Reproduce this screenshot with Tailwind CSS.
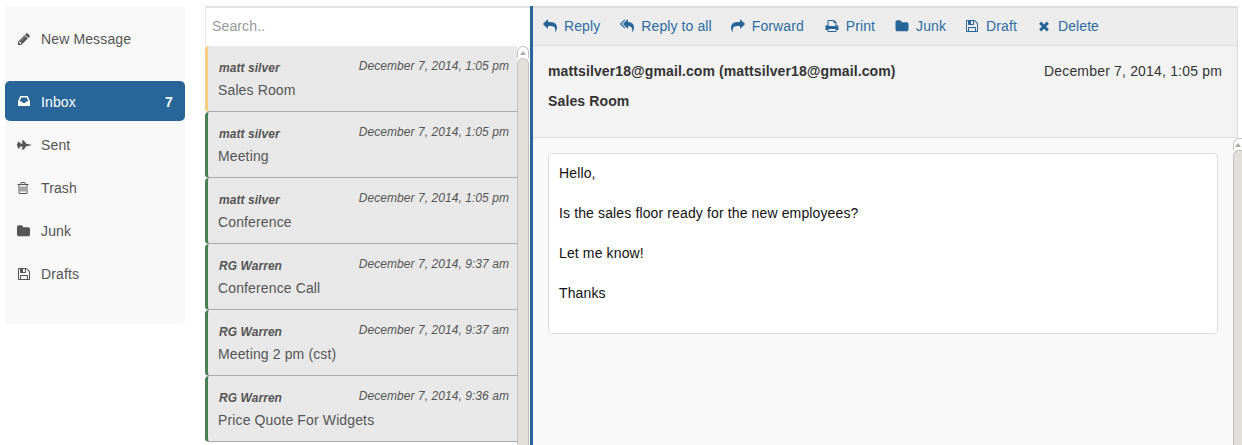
<!DOCTYPE html>
<html lang="en">
<head>
  <meta charset="UTF-8">
  <meta name="viewport" content="width=device-width, initial-scale=1.0">
  <title>Inbox</title>
  <script src="https://cdn.jsdelivr.net/npm/@tailwindcss/browser@4"></script>
</head>
<body class="bg-white font-['Liberation_Sans',Arial,sans-serif] text-[14px] leading-[20px] tracking-[0.13px] text-[#333]">
  <svg class="hidden">
    <symbol id="i-pencil" viewBox="0 0 1792 1792"><path d="M491 1536l91-91-235-235-91 91v107h128v128h107zm523-928q0-22-22-22-10 0-17 7l-542 542q-7 7-7 17 0 22 22 22 10 0 17-7l542-542q7-7 7-17zm-54-192l416 416-832 832h-416v-416zm683 96q0 53-37 90l-166 166-416-416 166-165q36-38 90-38 53 0 91 38l235 234q37 39 37 91z"/></symbol>
    <symbol id="i-inbox" viewBox="0 0 1792 1792"><path d="M1151 960h316q-1-3-2.5-8.5t-2.5-7.5l-212-496h-708l-212 496q-1 2-2.5 7.5t-2.5 8.5h316l95 192h320zm513 30v482q0 26-19 45t-45 19h-1408q-26 0-45-19t-19-45v-482q0-62 25-123l238-552q10-25 36.5-42t52.5-17h832q26 0 52.5 17t36.5 42l238 552q25 61 25 123z"/></symbol>
    <symbol id="i-plane" viewBox="0 0 16 10"><path d="M16 5 10.5 3.7 H9.8 L7.4 .2 H5 L6 3.4 H3.6 L2.2 1.4 H.6 L1.2 3.4 H0 V6.6 H1.2 L.6 8.6 H2.2 L3.6 6.6 H6 L5 9.8 H7.4 L9.8 6.3 H10.5 L16 5 Z"/></symbol>
    <symbol id="i-trash" viewBox="0 0 1792 1792"><path d="M704 736v576q0 14-9 23t-23 9h-64q-14 0-23-9t-9-23v-576q0-14 9-23t23-9h64q14 0 23 9t9 23zm256 0v576q0 14-9 23t-23 9h-64q-14 0-23-9t-9-23v-576q0-14 9-23t23-9h64q14 0 23 9t9 23zm256 0v576q0 14-9 23t-23 9h-64q-14 0-23-9t-9-23v-576q0-14 9-23t23-9h64q14 0 23 9t9 23zm128 724v-948h-896v948q0 22 7 40.5t14.5 27 10.5 8.5h832q3 0 10.5-8.5t14.5-27 7-40.5zm-672-1076h448l-48-117q-7-9-17-11h-317q-10 2-17 11zm928 32v64q0 14-9 23t-23 9h-96v948q0 83-47 143.5t-113 60.5h-832q-66 0-113-58.5t-47-141.5v-952h-96q-14 0-23-9t-9-23v-64q0-14 9-23t23-9h309l70-167q15-37 54-63t79-26h320q40 0 79 26t54 63l70 167h309q14 0 23 9t9 23z"/></symbol>
    <symbol id="i-folder" viewBox="0 0 1664 1792"><path d="M1664 648v704q0 92-66 158t-158 66h-1216q-92 0-158-66t-66-158v-960q0-92 66-158t158-66h320q92 0 158 66t66 158v32h672q92 0 158 66t66 158z"/></symbol>
    <symbol id="i-save" viewBox="0 0 1792 1792"><path d="M512 1536h768v-384h-768v384zm896 0h128v-896q0-14-10-38.5t-20-34.5l-281-281q-10-10-34-20t-39-10v416q0 40-28 68t-68 28h-576q-40 0-68-28t-28-68v-416h-128v1280h128v-416q0-40 28-68t68-28h832q40 0 68 28t28 68v416zm-384-928v-320q0-13-9.5-22.5t-22.5-9.5h-192q-13 0-22.5 9.5t-9.5 22.5v320q0 13 9.5 22.5t22.5 9.5h192q13 0 22.5-9.5t9.5-22.5zm640 32v928q0 40-28 68t-68 28h-1344q-40 0-68-28t-28-68v-1344q0-40 28-68t68-28h928q40 0 88 20t76 48l280 280q28 28 48 76t20 88z"/></symbol>
    <symbol id="i-reply" viewBox="0 0 1792 1792"><path d="M1792 1120q0 166-127 451-3 7-10.5 24t-13.5 30-13 22q-12 17-28 17-15 0-23.5-10t-8.5-25q0-9 2.5-26.5t2.5-23.5q5-68 5-123 0-101-17.5-181t-48.5-138.5-80-101-105.5-69.5-133-42.5-154-21.5-175.5-6h-224v256q0 26-19 45t-45 19-45-19l-512-512q-19-19-19-45t19-45l512-512q19-19 45-19t45 19 19 45v256h224q713 0 875 403 53 134 53 333z"/></symbol>
    <symbol id="i-reply-all" viewBox="0 0 1792 1792"><path d="M640 1082v70q0 42-39 59-13 5-25 5-27 0-45-19l-512-512q-19-19-19-45t19-45l512-512q29-31 70-14 39 17 39 59v69l-397 398q-19 19-19 45t19 45zm1152 38q0 58-17 133.5t-38.5 138-48 125-40.5 90.5l-20 40q-8 17-28 17-6 0-9-1-25-8-23-34 43-400-106-565-64-71-170.5-110.5t-267.5-52.5v251q0 42-39 59-13 5-25 5-27 0-45-19l-512-512q-19-19-19-45t19-45l512-512q18-19 45-19 12 0 25 5 39 17 39 59v262q411 28 599 221 169 173 169 509z"/></symbol>
    <symbol id="i-share" viewBox="0 0 1792 1792"><path d="M1792 640q0 26-19 45l-512 512q-19 19-45 19t-45-19-19-45v-256h-224q-98 0-175.5 6t-154 21.5-133 42.5-105.5 69.5-80 101-48.5 138.5-17.5 181q0 55 5 123 0 6 2.5 23.5t2.5 26.5q0 15-8.5 25t-23.5 10q-16 0-28-17-7-9-13-22t-13.5-30-10.5-24q-127-285-127-451 0-199 53-333 162-403 875-403h224v-256q0-26 19-45t45-19 45 19l512 512q19 19 19 45z"/></symbol>
    <symbol id="i-print" viewBox="0 0 1792 1792"><path d="M448 1536h896v-256h-896v256zm0-640h896v-384h-160q-40 0-68-28t-28-68v-160h-640v640zm1152 64q0-26-19-45t-45-19-45 19-19 45 19 45 45 19 45-19 19-45zm128 0v416q0 13-9.5 22.5t-22.5 9.5h-224v160q0 40-28 68t-68 28h-960q-40 0-68-28t-28-68v-160h-224q-13 0-22.5-9.5t-9.5-22.5v-416q0-79 56.5-135.5t135.5-56.5h64v-544q0-40 28-68t68-28h672q40 0 88 20t76 48l152 152q28 28 48 76t20 88v256h64q79 0 135.5 56.5t56.5 135.5z"/></symbol>
    <symbol id="i-times" viewBox="0 0 1408 1792"><path d="M1298 1322q0 40-28 68l-136 136q-28 28-68 28t-68-28l-294-294-294 294q-28 28-68 28t-68-28l-136-136q-28-28-28-68t28-68l294-294-294-294q-28-28-28-68t28-68l136-136q28-28 68-28t68 28l294 294 294-294q28-28 68-28t68 28l136 136q28 28 28 68t-28 68l-294 294 294 294q28 28 28 68z"/></symbol>
  </svg>

  <div class="flex h-[445px] overflow-hidden">
    <!-- folders -->
    <nav class="ml-[5px] mt-[6px] w-[180px] h-[318px] shrink-0 bg-[#f8f8f8] rounded-[2px] text-[#555]">
      <a class="flex items-center h-[40px] mt-[13px] pl-[12px] gap-[10px]"><svg class="w-[14px] h-[14px] fill-[#555]"><use href="#i-pencil"/></svg>New Message</a>
      <a class="flex items-center h-[40px] mt-[22px] pl-[12px] pr-[12px] pt-[2px] gap-[10px] bg-[#286699] rounded-[5px] text-white"><svg class="w-[14px] h-[14px] fill-white -mt-[2px]"><use href="#i-inbox"/></svg>Inbox<span class="ml-auto font-bold">7</span></a>
      <a class="flex items-center h-[40px] mt-[4px] pl-[12px] gap-[9px]"><svg class="w-[15px] h-[10px] fill-[#555]"><use href="#i-plane"/></svg>Sent</a>
      <a class="flex items-center h-[40px] mt-[3px] pl-[12px] gap-[10px]"><svg class="w-[14px] h-[14px] fill-[#555] -ml-[1px] mr-[1px]"><use href="#i-trash"/></svg>Trash</a>
      <a class="flex items-center h-[40px] mt-[3px] pl-[12px] gap-[11px]"><svg class="w-[13px] h-[14px] fill-[#555]"><use href="#i-folder"/></svg>Junk</a>
      <a class="flex items-center h-[40px] mt-[3px] pl-[12px] gap-[10px]"><svg class="w-[14px] h-[14px] fill-[#555]"><use href="#i-save"/></svg>Drafts</a>
    </nav>

    <!-- message list -->
    <section class="ml-[20px] mt-[6px] w-[325px] shrink-0 flex flex-col">
      <input placeholder="Search.." class="h-[40px] shrink-0 w-full px-[6px] pb-[2px] bg-white border-t-2 border-l border-[#e4e4e4] outline-none placeholder:text-[#999]">
      <div class="flex flex-1 min-h-0">
        <ul class="w-[312px] shrink-0">
          <li class="h-[66px] bg-[#e8e8e8] border-l-[3px] border-l-[#fbcb80] border-b border-b-[#aaa] rounded-l-[4px] pl-[10px] pr-[8px] pt-[10px] text-[#555]">
            <div class="flex justify-between h-[24px] text-[12px] italic tracking-[0.06px]"><b class="pt-[2px] pl-[1px]">matt silver</b><span>December 7, 2014, 1:05 pm</span></div>
            <div>Sales Room</div>
          </li>
          <li class="h-[66px] bg-[#e8e8e8] border-l-[3px] border-l-[#4a7f53] border-b border-b-[#aaa] rounded-l-[4px] pl-[10px] pr-[8px] pt-[10px] text-[#555]">
            <div class="flex justify-between h-[24px] text-[12px] italic tracking-[0.06px]"><b class="pt-[2px] pl-[1px]">matt silver</b><span>December 7, 2014, 1:05 pm</span></div>
            <div>Meeting</div>
          </li>
          <li class="h-[66px] bg-[#e8e8e8] border-l-[3px] border-l-[#4a7f53] border-b border-b-[#aaa] rounded-l-[4px] pl-[10px] pr-[8px] pt-[10px] text-[#555]">
            <div class="flex justify-between h-[24px] text-[12px] italic tracking-[0.06px]"><b class="pt-[2px] pl-[1px]">matt silver</b><span>December 7, 2014, 1:05 pm</span></div>
            <div>Conference</div>
          </li>
          <li class="h-[66px] bg-[#e8e8e8] border-l-[3px] border-l-[#4a7f53] border-b border-b-[#aaa] rounded-l-[4px] pl-[10px] pr-[8px] pt-[10px] text-[#555]">
            <div class="flex justify-between h-[24px] text-[12px] italic tracking-[0.06px]"><b class="pt-[2px] pl-[1px]">RG Warren</b><span>December 7, 2014, 9:37 am</span></div>
            <div>Conference Call</div>
          </li>
          <li class="h-[66px] bg-[#e8e8e8] border-l-[3px] border-l-[#4a7f53] border-b border-b-[#aaa] rounded-l-[4px] pl-[10px] pr-[8px] pt-[10px] text-[#555]">
            <div class="flex justify-between h-[24px] text-[12px] italic tracking-[0.06px]"><b class="pt-[2px] pl-[1px]">RG Warren</b><span>December 7, 2014, 9:37 am</span></div>
            <div>Meeting 2 pm (cst)</div>
          </li>
          <li class="h-[66px] bg-[#e8e8e8] border-l-[3px] border-l-[#4a7f53] border-b border-b-[#aaa] rounded-l-[4px] pl-[10px] pr-[8px] pt-[10px] text-[#555]">
            <div class="flex justify-between h-[24px] text-[12px] italic tracking-[0.06px]"><b class="pt-[2px] pl-[1px]">RG Warren</b><span>December 7, 2014, 9:36 am</span></div>
            <div>Price Quote For Widgets</div>
          </li>
        </ul>
        <div class="w-[12px] flex flex-col bg-white">
          <div class="h-[12px] shrink-0 bg-white border border-b-0 border-[#c4c0bc] rounded-t-[6px] flex justify-center pt-[4px]"><span class="w-0 h-0 border-x-[3px] border-x-transparent border-b-[4px] border-b-[#aaa]"></span></div>
          <div class="flex-1 bg-[#e3dfdb] border-x border-t border-[#c4c0bc] rounded-t-[6px]"></div>
        </div>
      </div>
    </section>

    <!-- message view -->
    <main class="flex-1 mt-[6px] border-l-[3px] border-[#286699] flex flex-col min-w-0">
      <div class="mr-[4px] h-[40px] shrink-0 bg-[#ececec] border-t-2 border-b border-r border-[#ddd] flex items-center pl-[10px] pb-[2px] gap-[19px] tracking-[0.1px] text-[#2d6ca2]">
        <a class="flex items-center gap-[7px]"><svg class="w-[14px] h-[14px] fill-[#286699]"><use href="#i-reply"/></svg>Reply</a>
        <a class="ml-[1px] flex items-center gap-[7px]"><svg class="w-[14px] h-[14px] fill-[#286699]"><use href="#i-reply-all"/></svg>Reply to all</a>
        <a class="flex items-center gap-[7px]"><svg class="w-[14px] h-[14px] fill-[#286699]"><use href="#i-share"/></svg>Forward</a>
        <a class="ml-[2px] flex items-center gap-[7px]"><svg class="w-[14px] h-[14px] fill-[#286699]"><use href="#i-print"/></svg>Print</a>
        <a class="ml-[1px] flex items-center gap-[7px]"><svg class="w-[14px] h-[14px] fill-[#286699]"><use href="#i-folder"/></svg>Junk</a>
        <a class="flex items-center gap-[7px]"><svg class="w-[14px] h-[14px] fill-[#286699]"><use href="#i-save"/></svg>Draft</a>
        <a class="ml-[1px] flex items-center gap-[7px]"><svg class="w-[14px] h-[14px] fill-[#286699]"><use href="#i-times"/></svg>Delete</a>
      </div>
      <header class="mr-[4px] h-[92px] shrink-0 bg-[#f3f3f3] border-b border-r border-[#ddd] pl-[15px] pr-[15px] pt-[15px]">
        <div class="flex justify-between"><b class="tracking-[0.11px]">mattsilver18@gmail.com (mattsilver18@gmail.com)</b><span class="tracking-[0.18px]">December 7, 2014, 1:05 pm</span></div>
        <div class="mt-[10px] font-bold">Sales Room</div>
      </header>
      <div class="flex flex-1 min-h-0">
        <div class="flex-1 bg-[#f9f9f9] pl-[15px] pr-[15px] pt-[15px]">
          <div class="h-[181px] bg-white border border-[#ddd] rounded-[4px] px-[10px] pt-[9px] text-[#111]">
            <p>Hello,</p>
            <p class="mt-[20px]">Is the sales floor ready for the new employees?</p>
            <p class="mt-[20px]">Let me know!</p>
            <p class="mt-[20px]">Thanks</p>
          </div>
        </div>
        <div class="w-[9px] flex flex-col bg-white">
          <div class="h-[12px] shrink-0 bg-white border-l border-t border-[#c4c0bc] rounded-tl-[6px] flex justify-center pt-[4px]"><span class="w-0 h-0 border-x-[3px] border-x-transparent border-b-[4px] border-b-[#aaa]"></span></div>
          <div class="flex-1 bg-[#e3dfdb] border-l border-t border-[#c4c0bc] rounded-tl-[6px]"></div>
        </div>
      </div>
    </main>
  </div>
</body>
</html>
